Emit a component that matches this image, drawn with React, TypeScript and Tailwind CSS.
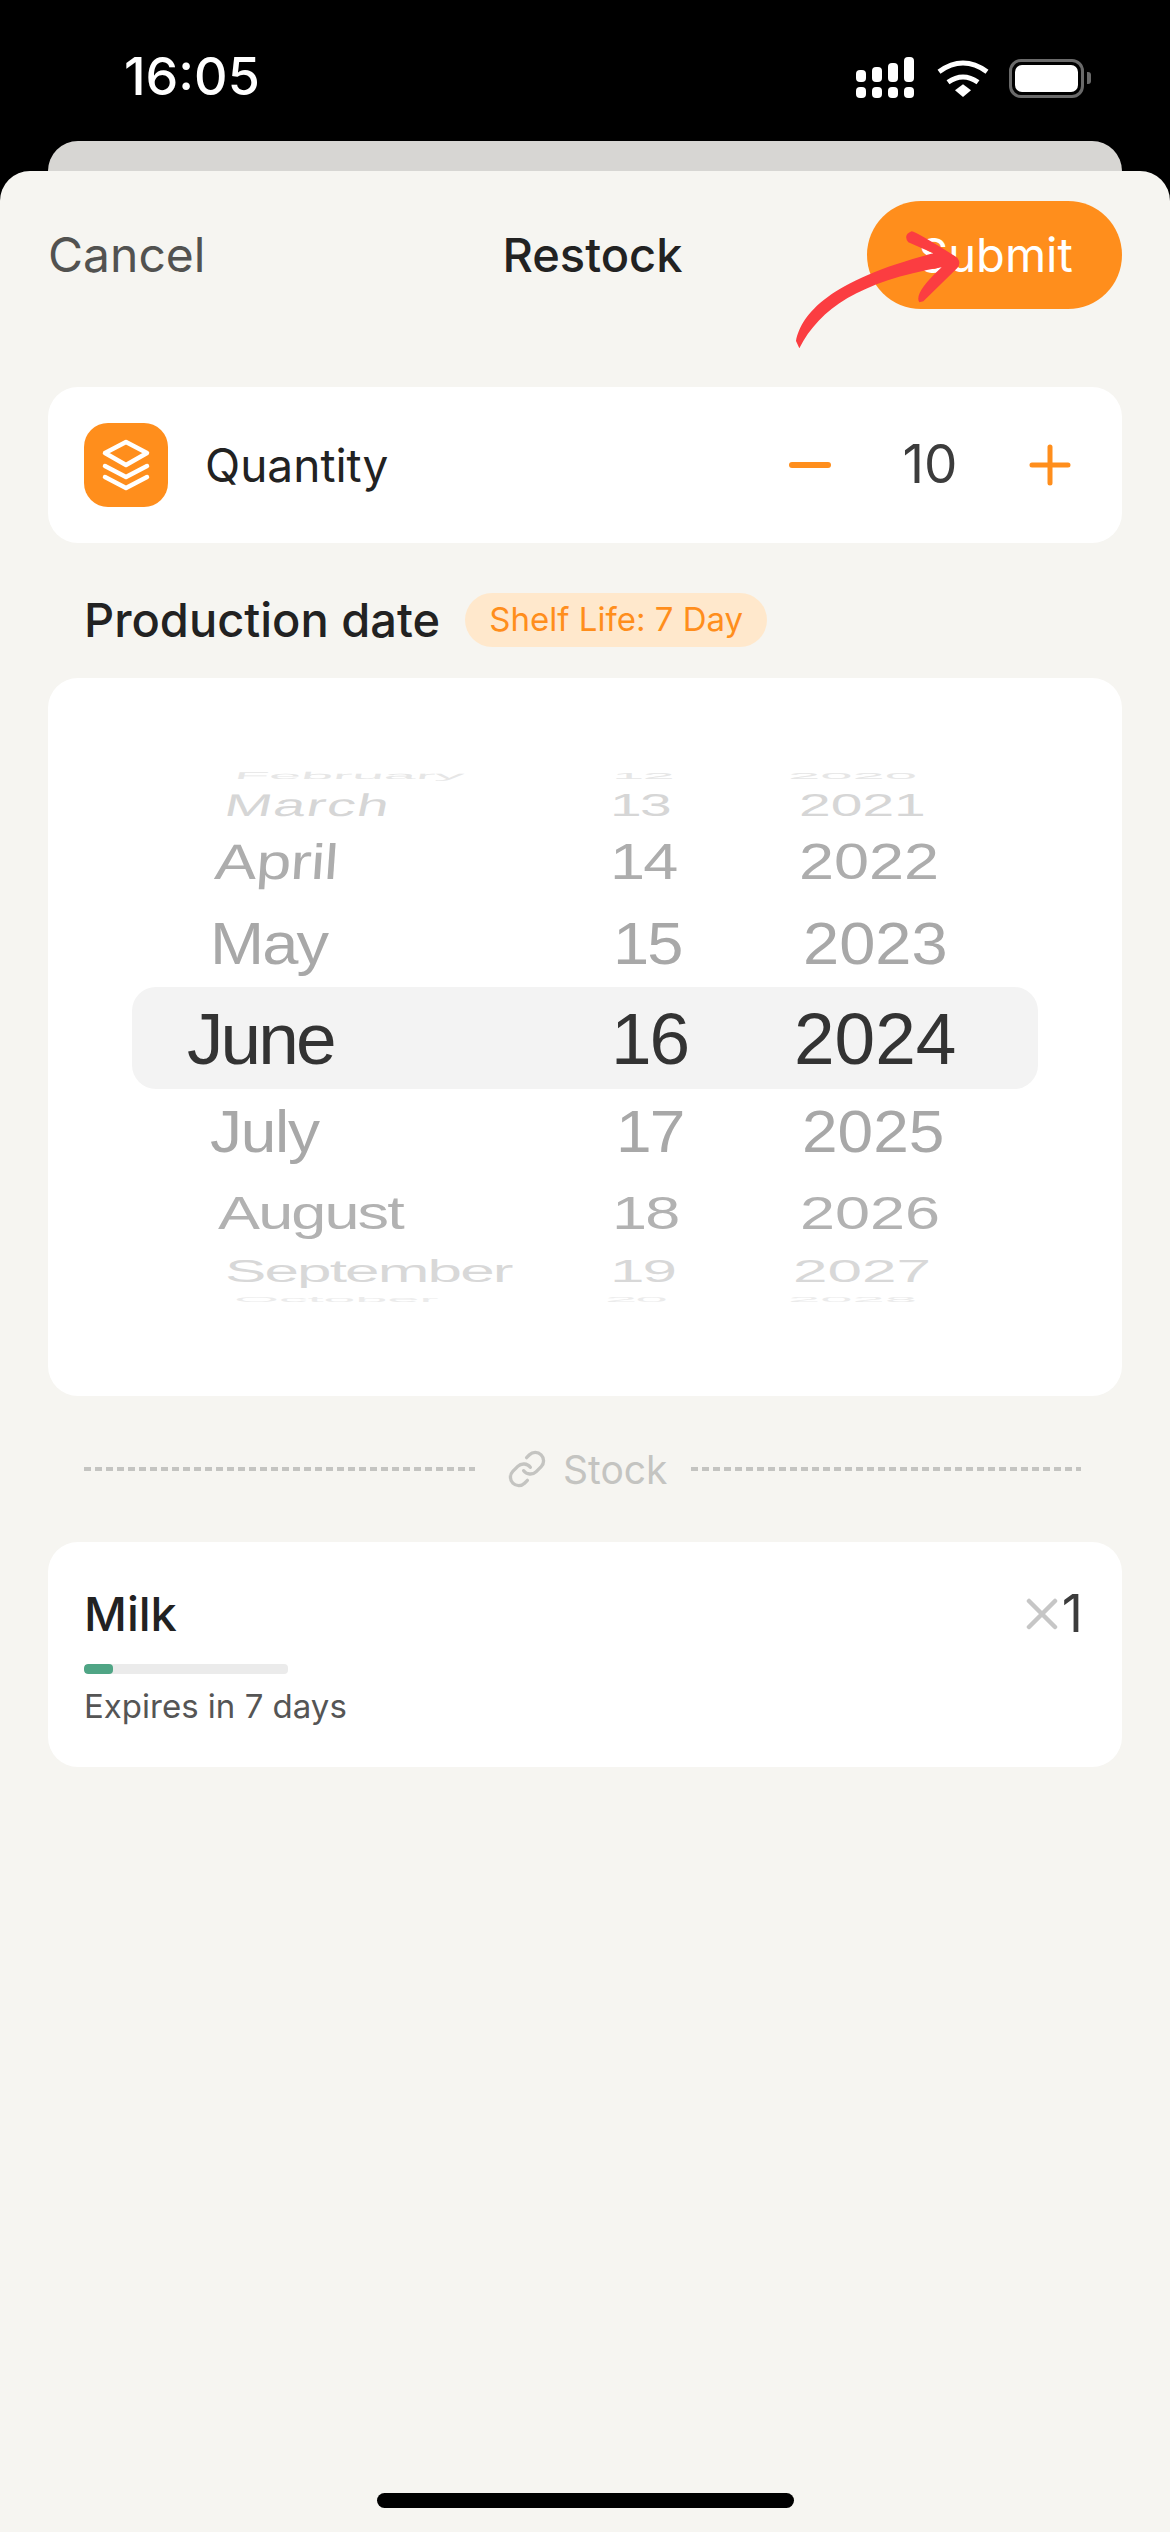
import { Link } from 'lucide-react';

const sans = "font-['Inter',sans-serif]";

// wheel rows, top to bottom; the picker squashes rows toward the edges
const wheelRows = [
    {
        month: 'February', day: '12', year: '2020', rowH: 'h-[18px]',
        text: 'text-[#e6e6e6] scale-y-[0.17]', size: 'text-[58px]', track: 'tracking-[-0.005em]',
        monthX: 'pl-[102px] -skew-x-[14deg]', dayX: 'pl-[40px]', yearX: 'pl-[48px]',
    },
    {
        month: 'March', day: '13', year: '2021', rowH: 'h-[40px]',
        text: 'text-[#d6d6d6] scale-y-[0.55]', size: 'text-[57px]', track: 'tracking-[0.025em]',
        monthX: 'pl-[93px] -skew-x-[12deg]', dayX: 'pl-[38px]', yearX: 'pl-[59px]',
    },
    {
        month: 'April', day: '14', year: '2022', rowH: 'h-[74px]',
        text: 'text-[#adadad] scale-y-[0.79]', size: 'text-[63px]', track: 'tracking-[-0.01em]',
        monthX: 'pl-[83px] -skew-x-[4deg]', dayX: 'pl-[38px]', yearX: 'pl-[59px]',
    },
    {
        month: 'May', day: '15', year: '2023', rowH: 'h-[88px]',
        text: 'text-[#a8a8a8] scale-y-[0.91]', size: 'text-[65px]', track: 'tracking-[-0.03em]',
        monthX: 'pl-[78px]', dayX: 'pl-[41px]', yearX: 'pl-[63px]',
    },
    {
        month: 'June', day: '16', year: '2024', rowH: 'h-[102px] rounded-[24px] bg-[#f3f3f3]',
        text: 'text-[#333333]', size: 'text-[73px]', track: 'tracking-[-0.04em]',
        monthX: 'pl-[55px]', dayX: 'pl-[39px]', yearX: 'pl-[54px]',
    },
    {
        month: 'July', day: '17', year: '2025', rowH: 'h-[86px]',
        text: 'text-[#a8a8a8] scale-y-[0.93]', size: 'text-[64px]', track: 'tracking-[-0.02em]',
        monthX: 'pl-[78px]', dayX: 'pl-[44px]', yearX: 'pl-[62px]',
    },
    {
        month: 'August', day: '18', year: '2026', rowH: 'h-[76px]',
        text: 'text-[#b2b2b2] scale-y-[0.72]', size: 'text-[63px]', track: 'tracking-[-0.03em]',
        monthX: 'pl-[86px]', dayX: 'pl-[40px]', yearX: 'pl-[60px]',
    },
    {
        month: 'September', day: '19', year: '2027', rowH: 'h-[40px]',
        text: 'text-[#d8d8d8] scale-y-[0.5]', size: 'text-[62px]', track: 'tracking-[-0.03em]',
        monthX: 'pl-[93px]', dayX: 'pl-[38px]', yearX: 'pl-[53px]',
    },
    {
        month: 'October', day: '20', year: '2028', rowH: 'h-[16px]',
        text: 'text-[#ebebeb] scale-y-[0.14]', size: 'text-[58px]', track: 'tracking-[-0.005em]',
        monthX: 'pl-[102px]', dayX: 'pl-[33px]', yearX: 'pl-[48px]',
    },
];

function StatusIcons() {
    return (
        <div className="flex items-center">
            <svg width="60" height="42" viewBox="0 0 60 42" fill="white">
                <rect x="0" y="13" width="10" height="12" rx="4" />
                <rect x="16" y="10" width="10" height="15" rx="4" />
                <rect x="32" y="6" width="10" height="19" rx="4" />
                <rect x="48" y="0" width="10" height="25" rx="4" />
                <rect x="0" y="30" width="10" height="11" rx="4" />
                <rect x="16" y="30" width="10" height="11" rx="4" />
                <rect x="32" y="30" width="10" height="11" rx="4" />
                <rect x="48" y="30" width="10" height="11" rx="4" />
            </svg>
            <svg className="ml-[21px]" width="52" height="38" viewBox="0 0 156 114" fill="none" stroke="white">
                <path d="M6 38 Q78 -14 150 38" strokeWidth="15" />
                <path d="M33 70 Q78 38 123 70" strokeWidth="15" />
                <path d="M54 94 L78 76 L102 94 L78 114 Z" fill="white" stroke="none" />
            </svg>
            <div className="ml-[20px] flex items-center">
                <div className="flex h-[39px] w-[75px] rounded-[12px] border-[3px] border-[#6a6a6a] p-[3px]">
                    <div className="flex-1 rounded-[7px] bg-white" />
                </div>
                <div className="ml-[3px] h-[12px] w-[4px] rounded-r-[3px] bg-[#6a6a6a]" />
            </div>
        </div>
    );
}

function QuantityCard() {
    return (
        <div className="mt-[78px] flex h-[156px] items-center rounded-[30px] bg-white pl-[36px] pr-[51px]">
            <div className="h-[84px] w-[84px] rounded-[24px] bg-[#ff8e1c]">
                <svg width="84" height="84" viewBox="0 0 84 84" fill="none" stroke="white" strokeWidth="4.5" strokeLinecap="round" strokeLinejoin="round">
                    <path d="M21 30 L42 19 L63 30 L42 42 Z" />
                    <path d="M21 43 L42 54 L63 43" />
                    <path d="M21 54 L42 65 L63 54" />
                </svg>
            </div>
            <span className="ml-[37px] text-[46px] text-[#222222]">Quantity</span>
            <svg className="ml-auto" width="42" height="42" viewBox="0 0 42 42" stroke="#ff8e1c" strokeWidth="6" strokeLinecap="round">
                <path d="M3 21 H39" />
            </svg>
            <span className="w-[198px] text-center text-[53px] text-[#3c3c3c]">10</span>
            <svg width="42" height="42" viewBox="0 0 42 42" stroke="#ff8e1c" strokeWidth="5" strokeLinecap="round">
                <path d="M3 21 H39 M21 3 V39" />
            </svg>
        </div>
    );
}

function Wheel() {
    return (
        <div className="mt-[31px] h-[718px] rounded-[30px] bg-white px-[84px] pt-[89px]">
            {wheelRows.map((row) => (
                <div key={row.month} className={`flex items-center font-['Liberation_Sans',sans-serif] leading-none ${row.rowH}`}>
                    <div className={`w-[440px] ${row.monthX}`}>
                        <span className={`inline-block ${row.track} ${row.size} ${row.text}`}>{row.month}</span>
                    </div>
                    <div className={`w-[168px] ${row.dayX}`}>
                        <span className={`inline-block tracking-[-0.03em] ${row.size} ${row.text}`}>{row.day}</span>
                    </div>
                    <div className={`flex-1 ${row.yearX}`}>
                        <span className={`inline-block ${row.size} ${row.text}`}>{row.year}</span>
                    </div>
                </div>
            ))}
        </div>
    );
}

export default function App() {
    return (
        <div className={`flex h-[2532px] w-[1170px] flex-col overflow-hidden bg-black ${sans}`}>
            <div className="flex h-[141px] items-start justify-between pl-[124px] pr-[79px] pt-[50px] text-white">
                <span className="text-[52px] font-medium leading-[54px]">16:05</span>
                <div className="mt-[7px]">
                    <StatusIcons />
                </div>
            </div>
            <div className="mx-[48px] h-[30px] rounded-t-[30px] bg-[#d7d6d3]" />

            <div className="relative flex flex-1 flex-col rounded-t-[30px] bg-[#f6f5f1] px-[48px] pt-[30px]">
                <div className="flex h-[108px] items-center">
                    <span className="text-[48px] text-[#525250]">Cancel</span>
                    <span className="ml-[297px] text-[47px] font-medium text-[#222222]">Restock</span>
                    <div className="ml-auto flex h-[108px] w-[255px] items-center justify-center rounded-[54px] bg-[#ff8e1c] pl-[2px] text-[47px] text-white">
                        Submit
                    </div>
                </div>

                <QuantityCard />

                <div className="mt-[50px] flex h-[54px] items-center pl-[36px]">
                    <span className="text-[47px] font-medium text-[#222222]">Production date</span>
                    <span className="ml-[25px] flex h-[54px] w-[302px] items-center justify-center rounded-[27px] bg-[#ffe8cc] text-[33px] text-[#ff8e1c]">
                        Shelf Life: 7 Day
                    </span>
                </div>

                <Wheel />

                <div className="mt-[53px] flex h-[40px] items-center pl-[36px] pr-[41px]">
                    <div className="h-[4px] w-[391px] bg-[repeating-linear-gradient(90deg,#c4c4c1_0_7px,transparent_7px_11px)]" />
                    <Link className="ml-[32px] text-[#c4c4c1]" size={40} />
                    <span className="ml-[16px] pt-[2px] text-[39px] text-[#c4c4c1]">Stock</span>
                    <div className="ml-auto h-[4px] w-[390px] bg-[repeating-linear-gradient(90deg,#c4c4c1_0_7px,transparent_7px_11px)]" />
                </div>

                <div className="mt-[53px] h-[225px] rounded-[30px] bg-white pl-[36px] pr-[39px] pt-[44px]">
                    <div className="flex items-center">
                        <span className="text-[47px] leading-[56px] font-medium text-[#222222]">Milk</span>
                        <svg className="ml-auto" width="32" height="32" viewBox="0 0 32 32" stroke="#c6c6c6" strokeWidth="4.5" strokeLinecap="round">
                            <path d="M3 3 L29 29 M29 3 L3 29" />
                        </svg>
                        <span className="ml-[4px] text-[52px] leading-[56px] text-[#3c3c3c]">1</span>
                    </div>
                    <div className="mt-[22px] h-[10px] w-[204px] overflow-hidden rounded-[4px] bg-[#ebebeb]">
                        <div className="h-full w-[29px] rounded-[4px] bg-[#4fa585]" />
                    </div>
                    <div className="mt-[13px] text-[33px] leading-[38px] text-[#555555]">Expires in 7 days</div>
                </div>

                <div className="mx-auto mb-[24px] mt-auto h-[15px] w-[417px] rounded-[8px] bg-black" />

                {/* hand drawn annotation on top of the submit button */}
                <svg className="absolute left-[760px] top-[9px]" width="380" height="180" viewBox="0 0 1140 540" fill="#fb3d41">
                    <path d="M108 483 C125 400 210 300 520 220 L445 187 Q428 165 455 154 Q470 156 592 233 Q604 250 592 264 L490 364 L478 367 Q460 340 545 262 C300 305 180 385 118 505 Z" />
                </svg>
            </div>
        </div>
    );
}
